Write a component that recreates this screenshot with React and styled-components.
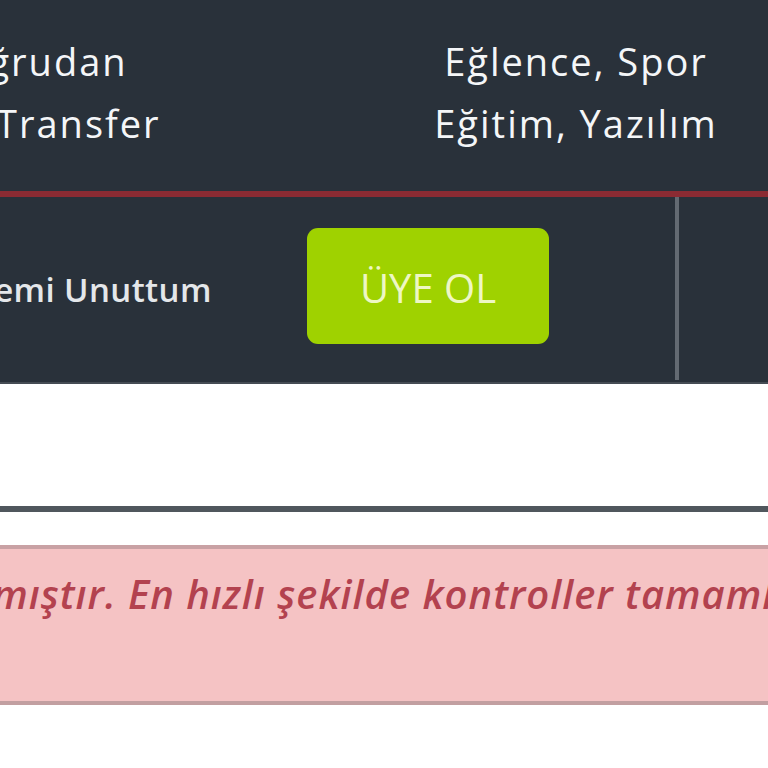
import React from "react";
import styled, { createGlobalStyle } from "styled-components";

const Global = createGlobalStyle`
  html, body { margin: 0; padding: 0; background: #ffffff; }
  body { font-family: "Open Sans", "Noto Sans", sans-serif; overflow: hidden; }
`;

const Page = styled.div`
  width: 768px;
  height: 768px;
  overflow: hidden;
  background: #ffffff;
  display: flex;
  flex-direction: column;
`;

const TopBar = styled.div`
  height: 191px;
  background: #29313a;
  border-bottom: 6px solid #8b2b33;
  display: grid;
  grid-template-columns: 384px 384px;
  overflow: hidden;
`;

const CategoryColumn = styled.div`
  padding-top: 30px;
  text-align: ${(p) => (p.$align === "center" ? "center" : "left")};
  white-space: nowrap;
  overflow: hidden;
`;

const CategoryLine = styled.div`
  font-size: 38px;
  line-height: 62px;
  letter-spacing: 2px;
  color: #f4f6f8;
  margin-left: ${(p) => p.$shift || 0}px;
`;

const SecondBar = styled.div`
  height: 185px;
  background: #29313a;
  border-bottom: 2px solid #454c54;
  display: flex;
  align-items: stretch;
  overflow: hidden;
`;

const ForgotCell = styled.div`
  width: 307px;
  flex: none;
  display: flex;
  align-items: center;
  overflow: hidden;
  white-space: nowrap;
`;

const ForgotLink = styled.a`
  font-size: 33px;
  font-weight: 600;
  letter-spacing: 0.4px;
  color: #e4e7ea;
  margin-left: -61px;
  text-decoration: none;
`;

const ButtonCell = styled.div`
  flex: none;
  width: 368px;
  padding-top: 31px;
`;

const SignUpButton = styled.button`
  width: 242px;
  height: 116px;
  border: none;
  border-radius: 11px;
  background: #9fd200;
  color: #eef7c4;
  font-family: "Open Sans", "Noto Sans", sans-serif;
  font-size: 40px;
  letter-spacing: 0px;
  padding: 2px 0 0;
  cursor: pointer;
`;

const Divider = styled.div`
  flex: none;
  width: 4px;
  margin-bottom: 2px;
  background: #636a72;
`;

const Spacer = styled.div`
  height: ${(p) => p.$h}px;
  flex: none;
`;

const Rule = styled.div`
  height: 6px;
  background: #50575d;
  flex: none;
`;

const Alert = styled.div`
  height: 152px;
  flex: none;
  background: #f5c3c4;
  border-top: 4px solid #c9a1a4;
  border-bottom: 4px solid #c29fa1;
  overflow: hidden;
  white-space: nowrap;
`;

const AlertText = styled.p`
  margin: 18px 0 0 -264px;
  font-size: 40px;
  line-height: 54px;
  letter-spacing: 1px;
  font-style: italic;
  font-weight: 600;
  color: #b3424f;
`;

export default function App() {
  return (
    <Page>
      <Global />
      <TopBar>
        <CategoryColumn>
          <CategoryLine $shift={-66}>Doğrudan</CategoryLine>
          <CategoryLine $shift={-4}>Transfer</CategoryLine>
        </CategoryColumn>
        <CategoryColumn $align="center">
          <CategoryLine>Eğlence, Spor</CategoryLine>
          <CategoryLine>Eğitim, Yazılım</CategoryLine>
        </CategoryColumn>
      </TopBar>
      <SecondBar>
        <ForgotCell>
          <ForgotLink href="#">Şifremi Unuttum</ForgotLink>
        </ForgotCell>
        <ButtonCell>
          <SignUpButton>ÜYE OL</SignUpButton>
        </ButtonCell>
        <Divider />
      </SecondBar>
      <Spacer $h={122} />
      <Rule />
      <Spacer $h={33} />
      <Alert>
        <AlertText>
          Talebiniz alınmıştır. En hızlı şekilde kontroller tamamlanacaktır.
        </AlertText>
      </Alert>
    </Page>
  );
}
